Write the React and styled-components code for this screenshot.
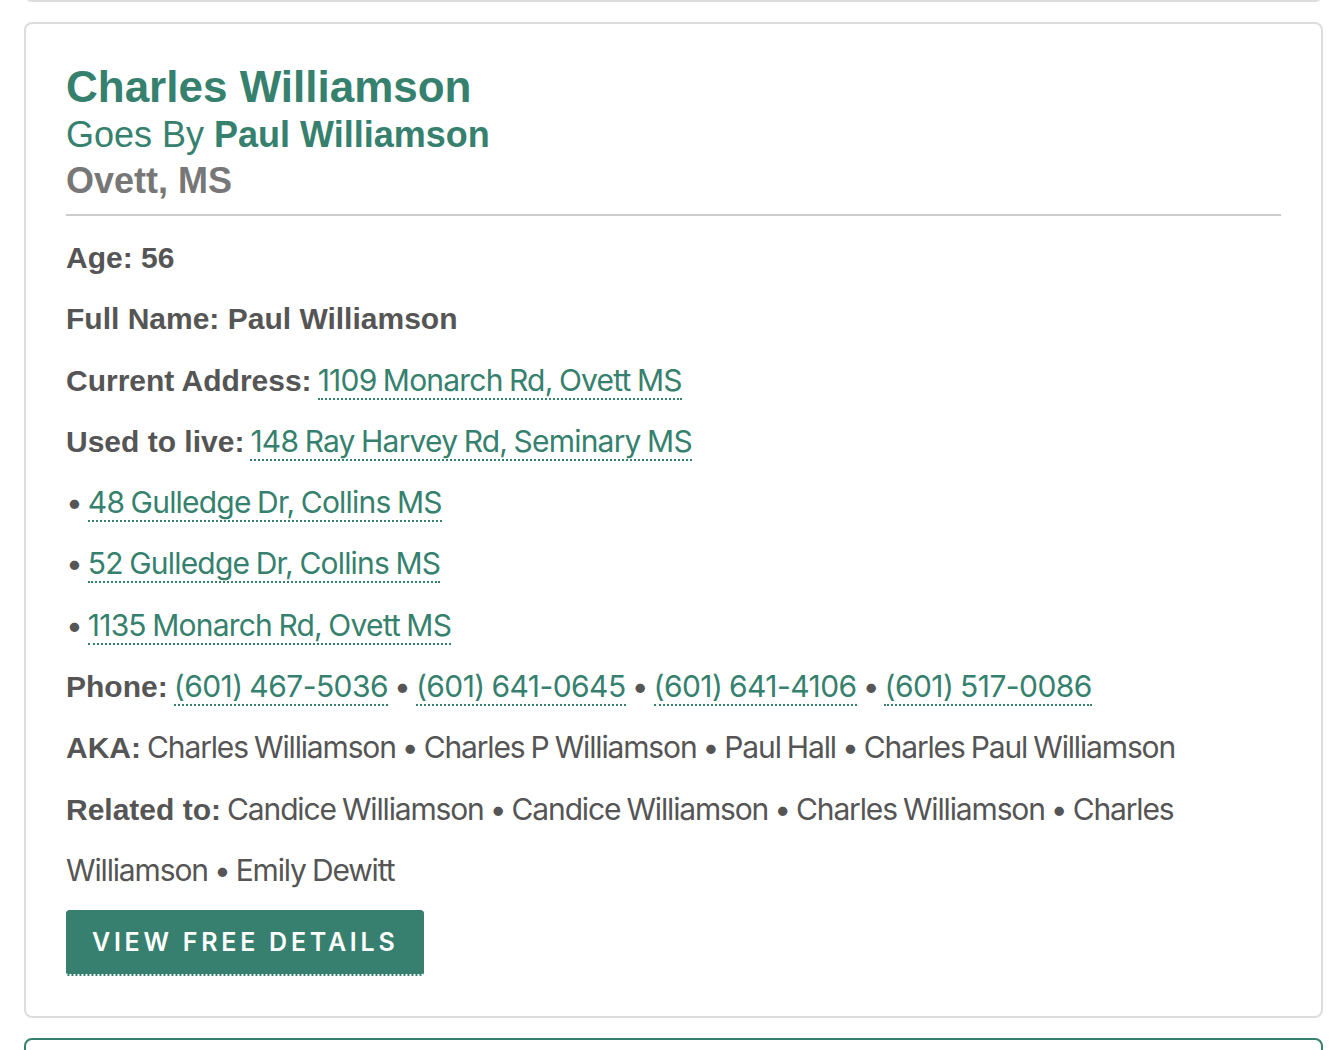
import React from "react";
import styled, { createGlobalStyle } from "styled-components";

const GlobalStyle = createGlobalStyle`
  body {
    margin: 0;
    background: #fff;
    font-family: "Liberation Sans", Arial, sans-serif;
  }
`;

const GREEN = "#36806e";
const TEXT = "#555";

const Page = styled.div`
  display: flex;
  flex-direction: column;
  gap: 20px;
  padding: 0 13px 0 24px;
  height: 1050px;
  overflow: hidden;
`;

const StubCard = styled.div`
  flex: none;
  height: 96px;
  border: 2px solid ${(p) => (p.$accent ? GREEN : "#ddd")};
  border-radius: 8px;
  margin-top: ${(p) => (p.$above ? "-98px" : "0")};
`;

const Card = styled.div`
  flex: none;
  border: 2px solid #ddd;
  border-radius: 8px;
  padding: 38px 40px 40px;
`;

const Name = styled.h2`
  margin: 0;
  font: 700 44px/50px "Liberation Sans", Arial, sans-serif;
  color: ${GREEN};
`;

const SubLine = styled.div`
  font: ${(p) => (p.$bold ? 700 : 400)} 36px/46px "Liberation Sans", Arial, sans-serif;
  color: ${(p) => p.$color || GREEN};

  strong {
    font-weight: 700;
  }
`;

const Divider = styled.hr`
  border: none;
  height: 2px;
  background: #ccc;
  margin: 10px 0 11px;
`;

const Line = styled.p`
  margin: 0;
  font: 400 30px/61.3px Inter, "Liberation Sans", sans-serif;
  letter-spacing: -1.15px;
  word-spacing: -1.2px;
  color: ${TEXT};
`;

const Label = styled.strong`
  font-family: "Liberation Sans", Arial, sans-serif;
  font-weight: 700;
  letter-spacing: 0;
  word-spacing: 0;
`;

const Link = styled.a`
  color: ${GREEN};
  text-decoration: none;
  letter-spacing: ${(p) => (p.$numeric ? "-0.55px" : "-0.8px")};
  border-bottom: 2px dotted ${GREEN};
  cursor: pointer;
`;

const Button = styled.a`
  display: inline-flex;
  align-items: center;
  box-sizing: border-box;
  height: 66px;
  margin-top: 9px;
  padding: 0 26px;
  background: #37806f;
  background-clip: padding-box;
  border-bottom: 2px dotted #37806f;
  border-radius: 3px;
  color: #fff;
  font: 600 25px Inter, "Liberation Sans", sans-serif;
  letter-spacing: 3.75px;
  text-transform: uppercase;
  text-decoration: none;
  cursor: pointer;
`;

const Sep = () => <> • </>;

const joinLinks = (items) =>
  items.map((item, i) => (
    <React.Fragment key={item}>
      {i > 0 && <Sep />}
      <Link $numeric>{item}</Link>
    </React.Fragment>
  ));

const person = {
  name: "Charles Williamson",
  goesBy: "Paul Williamson",
  location: "Ovett, MS",
  age: 56,
  fullName: "Paul Williamson",
  current: "1109 Monarch Rd, Ovett MS",
  past: [
    "148 Ray Harvey Rd, Seminary MS",
    "48 Gulledge Dr, Collins MS",
    "52 Gulledge Dr, Collins MS",
    "1135 Monarch Rd, Ovett MS",
  ],
  phones: ["(601) 467-5036", "(601) 641-0645", "(601) 641-4106", "(601) 517-0086"],
  aka: ["Charles Williamson", "Charles P Williamson", "Paul Hall", "Charles Paul Williamson"],
  related: [
    "Candice Williamson",
    "Candice Williamson",
    "Charles Williamson",
    "Charles Williamson",
    "Emily Dewitt",
  ],
};

const App = () => {
  const [firstPast, ...otherPast] = person.past;

  return (
    <>
      <GlobalStyle />
      <Page>
        <StubCard $above />
        <Card>
          <Name>{person.name}</Name>
          <SubLine>
            Goes By <strong>{person.goesBy}</strong>
          </SubLine>
          <SubLine $bold $color="#777">{person.location}</SubLine>
          <Divider />

          <Line><Label>Age: {person.age}</Label></Line>
          <Line><Label>Full Name: {person.fullName}</Label></Line>
          <Line>
            <Label>Current Address:</Label> <Link>{person.current}</Link>
          </Line>
          <Line>
            <Label>Used to live:</Label> <Link>{firstPast}</Link>
          </Line>
          {otherPast.map((addr) => (
            <Line key={addr}>
              • <Link>{addr}</Link>
            </Line>
          ))}
          <Line>
            <Label>Phone:</Label> {joinLinks(person.phones)}
          </Line>
          <Line>
            <Label>AKA:</Label> {person.aka.join(" • ")}
          </Line>
          <Line>
            <Label>Related to:</Label> {person.related.join(" • ")}
          </Line>

          <Button>View Free Details</Button>
        </Card>
        <StubCard $accent />
      </Page>
    </>
  );
};

export default App;
